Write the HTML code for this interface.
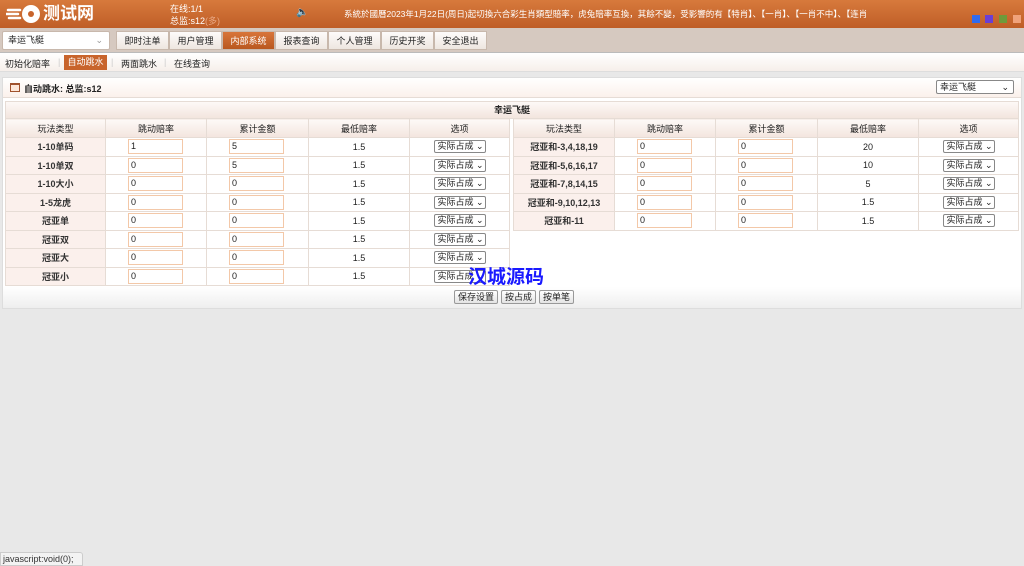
<!DOCTYPE html><html><head><meta charset="utf-8"><style>
*{margin:0;padding:0;box-sizing:border-box}
body{width:1024px;height:566px;background:#e8e8e8;font-family:"Liberation Sans","Noto Sans CJK SC",sans-serif;font-size:9px;color:#222;position:relative;overflow:hidden}
.abs{position:absolute}
#hd{left:0;top:0;width:1024px;height:28px;background:linear-gradient(#d77a3c,#bf5e27);color:#fff}
#nav{left:0;top:28px;width:1024px;height:25px;background:#d6c9c0;border-bottom:1px solid #bbb}
#sub{left:0;top:53px;width:1024px;height:19px;background:linear-gradient(#fff,#f6efea);border-bottom:1px solid #ddd}
.tab{position:absolute;top:3px;height:19px;line-height:19px;text-align:center;background:linear-gradient(#fdfbfa,#eee6e0);border:1px solid #c8b8ac;font-size:9px;color:#222}
#panel{left:2px;top:77px;width:1020px;height:232px;background:#fff;border:1px solid #ddd}
table{border-collapse:collapse;position:absolute;font-size:9px}
td{border:1px solid #e6dcd5;text-align:center;height:18.5px;padding:0}
td.l{background:#fbf0ec;font-weight:bold;color:#333}
th{background:linear-gradient(#fdf9f7,#f3e5de);font-weight:normal;height:19px;border:1px solid #e6dcd5}
.in{display:block;width:55px;height:15px;border:1px solid #f3c8a8;margin-left:22px;text-align:left;padding-left:2px;line-height:13px;background:#fff}
.sel{display:inline-block;width:52px;height:13px;border:1px solid #888;border-radius:2px;line-height:11px;font-size:9px;text-align:left;padding-left:3px;background:#fff}
.btn{position:absolute;top:290px;height:14px;line-height:12px;border:1px solid #999;border-radius:2px;background:linear-gradient(#fff,#e4e4e4);font-size:9px;text-align:center}
</style></head><body>
<div id="hd" class="abs">
 <svg class="abs" style="left:6px;top:4px" width="36" height="20" viewBox="0 0 36 20"><path d="M2 6h12M0 10h12M3 14h11" stroke="#fff" stroke-width="2.5" stroke-linecap="round"/><circle cx="25" cy="10" r="9" fill="#fff"/><circle cx="25" cy="10" r="3" fill="#c8642c"/></svg>
 <div class="abs" style="left:43px;top:3px;font-size:17px;line-height:22px;font-weight:bold;white-space:nowrap">测试网</div>
 <div class="abs" style="left:170px;top:2px;font-size:9px">在线:1/1</div>
 <div class="abs" style="left:170px;top:14px;font-size:9px">总监:s12<span style="color:#e9a985">(多)</span></div>
 <div class="abs" style="left:296px;top:7px;font-size:10px">🔈</div>
 <div class="abs" style="left:344px;top:8px;font-size:8.5px;white-space:nowrap">系統於國曆2023年1月22日(周日)起切換六合彩生肖類型賠率，虎兔賠率互換，其餘不變，受影響的有【特肖】、【一肖】、【一肖不中】、【连肖</div>
 <div class="abs" style="left:972px;top:15px;width:8px;height:8px;background:#2f6bf0"></div>
 <div class="abs" style="left:985px;top:15px;width:8px;height:8px;background:#6a3fd4"></div>
 <div class="abs" style="left:999px;top:15px;width:8px;height:8px;background:#6e9a3a"></div>
 <div class="abs" style="left:1013px;top:15px;width:8px;height:8px;background:#f0a27a"></div>
</div>
<div id="nav" class="abs">
 <div class="abs" style="left:2px;top:3px;width:108px;height:19px;background:#fff;border:1px solid #c8b8ac;border-radius:2px;line-height:17px;padding-left:5px">幸运飞艇<span style="position:absolute;right:6px;color:#999">⌄</span></div>
 <div class="tab" style="left:116px;width:53px">即时注单</div>
 <div class="tab" style="left:169px;width:53px">用户管理</div>
 <div class="tab" style="left:222px;width:53px;background:linear-gradient(#d8753a,#b9581f);color:#fff">内部系统</div>
 <div class="tab" style="left:275px;width:53px">报表查询</div>
 <div class="tab" style="left:328px;width:53px">个人管理</div>
 <div class="tab" style="left:381px;width:53px">历史开奖</div>
 <div class="tab" style="left:434px;width:53px">安全退出</div>
</div>
<div id="sub" class="abs">
 <span class="abs" style="left:5px;top:4px">初始化赔率</span><span class="abs" style="left:58px;top:4px;color:#ccc">|</span>
 <span class="abs" style="left:64px;top:2px;width:43px;height:15px;line-height:15px;text-align:center;background:#c8642c;color:#fff">自动跳水</span><span class="abs" style="left:111px;top:4px;color:#ccc">|</span>
 <span class="abs" style="left:121px;top:4px">两面跳水</span><span class="abs" style="left:164px;top:4px;color:#ccc">|</span>
 <span class="abs" style="left:174px;top:4px">在线查询</span>
</div>
<div id="panel" class="abs">
 <div class="abs" style="left:0;top:0;width:1018px;height:20px;background:linear-gradient(#fff,#fbf1ec);border-bottom:1px solid #e6dcd5"></div>
 <div class="abs" style="left:7px;top:5px;width:10px;height:9px;border:1px solid #a0522d;border-top-width:2px;background:#fde7d9"></div>
 <div class="abs" style="left:21px;top:4px;font-weight:bold">自动跳水: 总监:s12</div>
 <div class="abs" style="left:933px;top:2px;width:78px;height:14px;border:1px solid #888;border-radius:2px;line-height:12px;padding-left:3px;background:#fff">幸运飞艇<span style="position:absolute;right:4px">⌄</span></div>
 <div class="abs" style="left:2px;top:23px;width:1014px;height:18px;background:linear-gradient(#fdf9f7,#f3e5de);border:1px solid #e6dcd5;text-align:center;line-height:17px;font-weight:bold">幸运飞艇</div>
</div>
<table style="left:5px;top:118px;width:505px">
<tr><th style="width:100px">玩法类型</th><th style="width:101px">跳动赔率</th><th style="width:102px">累计金额</th><th style="width:101px">最低赔率</th><th>选项</th></tr>
<tr><td class="l">1-10单码</td><td><span class="in">1</span></td><td><span class="in">5</span></td><td>1.5</td><td><span class="sel">实际占成 ⌄</span></td></tr>
<tr><td class="l">1-10单双</td><td><span class="in">0</span></td><td><span class="in">5</span></td><td>1.5</td><td><span class="sel">实际占成 ⌄</span></td></tr>
<tr><td class="l">1-10大小</td><td><span class="in">0</span></td><td><span class="in">0</span></td><td>1.5</td><td><span class="sel">实际占成 ⌄</span></td></tr>
<tr><td class="l">1-5龙虎</td><td><span class="in">0</span></td><td><span class="in">0</span></td><td>1.5</td><td><span class="sel">实际占成 ⌄</span></td></tr>
<tr><td class="l">冠亚单</td><td><span class="in">0</span></td><td><span class="in">0</span></td><td>1.5</td><td><span class="sel">实际占成 ⌄</span></td></tr>
<tr><td class="l">冠亚双</td><td><span class="in">0</span></td><td><span class="in">0</span></td><td>1.5</td><td><span class="sel">实际占成 ⌄</span></td></tr>
<tr><td class="l">冠亚大</td><td><span class="in">0</span></td><td><span class="in">0</span></td><td>1.5</td><td><span class="sel">实际占成 ⌄</span></td></tr>
<tr><td class="l">冠亚小</td><td><span class="in">0</span></td><td><span class="in">0</span></td><td>1.5</td><td><span class="sel">实际占成 ⌄</span></td></tr>
</table>
<table style="left:513px;top:118px;width:506px">
<tr><th style="width:101px">玩法类型</th><th style="width:101px">跳动赔率</th><th style="width:102px">累计金额</th><th style="width:101px">最低赔率</th><th>选项</th></tr>
<tr><td class="l">冠亚和-3,4,18,19</td><td><span class="in">0</span></td><td><span class="in">0</span></td><td>20</td><td><span class="sel">实际占成 ⌄</span></td></tr>
<tr><td class="l">冠亚和-5,6,16,17</td><td><span class="in">0</span></td><td><span class="in">0</span></td><td>10</td><td><span class="sel">实际占成 ⌄</span></td></tr>
<tr><td class="l">冠亚和-7,8,14,15</td><td><span class="in">0</span></td><td><span class="in">0</span></td><td>5</td><td><span class="sel">实际占成 ⌄</span></td></tr>
<tr><td class="l">冠亚和-9,10,12,13</td><td><span class="in">0</span></td><td><span class="in">0</span></td><td>1.5</td><td><span class="sel">实际占成 ⌄</span></td></tr>
<tr><td class="l">冠亚和-11</td><td><span class="in">0</span></td><td><span class="in">0</span></td><td>1.5</td><td><span class="sel">实际占成 ⌄</span></td></tr>
</table>
<div class="abs" style="left:2px;top:287px;width:1020px;height:22px;background:linear-gradient(#fff,#eee);border:1px solid #ddd;border-top:none"></div>
<div class="btn" style="left:454px;width:44px">保存设置</div>
<div class="btn" style="left:501px;width:35px">按占成</div>
<div class="btn" style="left:539px;width:35px">按单笔</div>
<div class="abs" style="left:468px;top:262px;font-size:19px;font-weight:bold;color:#1a1aff">汉城源码</div>
<div class="abs" style="left:0;top:552px;width:83px;height:14px;background:#f3f3f3;border:1px solid #ccc;border-radius:0 3px 0 0;font-size:9px;line-height:13px;padding-left:2px;color:#333">javascript:void(0);</div>
</body></html>
